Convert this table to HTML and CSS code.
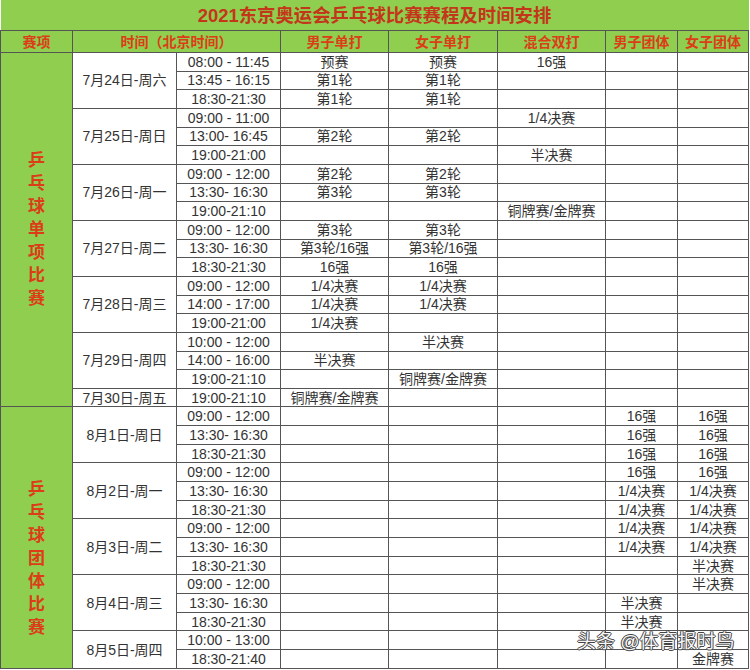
FILE: index.html
```html
<!DOCTYPE html>
<html lang="zh-CN">
<head>
<meta charset="utf-8">
<title>2021东京奥运会乒乓球比赛赛程及时间安排</title>
<link rel="stylesheet" href="styles.css">
</head>
<body>
<div class="page">
<table class="sched">
<colgroup>
<col class="c1"><col class="c2"><col class="c3"><col class="c4"><col class="c5"><col class="c6"><col class="c7"><col class="c8">
</colgroup>
<thead>
<tr class="title"><th colspan="8">2021东京奥运会乒乓球比赛赛程及时间安排</th></tr>
<tr class="head"><th>赛项</th><th colspan="2">时间（北京时间）</th><th>男子单打</th><th>女子单打</th><th>混合双打</th><th>男子团体</th><th>女子团体</th></tr>
</thead>
<tbody>
<tr><td rowspan="19" class="cat"><span class="cat-text">乒乓球单项比赛</span></td><td rowspan="3" class="date">7月24日-周六</td><td>08:00 - 11:45</td><td>预赛</td><td>预赛</td><td>16强</td><td></td><td></td></tr>
<tr><td>13:45 - 16:15</td><td>第1轮</td><td>第1轮</td><td></td><td></td><td></td></tr>
<tr><td>18:30-21:30</td><td>第1轮</td><td>第1轮</td><td></td><td></td><td></td></tr>

<tr><td rowspan="3" class="date">7月25日-周日</td><td>09:00 - 11:00</td><td></td><td></td><td>1/4决赛</td><td></td><td></td></tr>
<tr><td>13:00- 16:45</td><td>第2轮</td><td>第2轮</td><td></td><td></td><td></td></tr>
<tr><td>19:00-21:00</td><td></td><td></td><td>半决赛</td><td></td><td></td></tr>

<tr><td rowspan="3" class="date">7月26日-周一</td><td>09:00 - 12:00</td><td>第2轮</td><td>第2轮</td><td></td><td></td><td></td></tr>
<tr><td>13:30- 16:30</td><td>第3轮</td><td>第3轮</td><td></td><td></td><td></td></tr>
<tr><td>19:00-21:10</td><td></td><td></td><td>铜牌赛/金牌赛</td><td></td><td></td></tr>

<tr><td rowspan="3" class="date">7月27日-周二</td><td>09:00 - 12:00</td><td>第3轮</td><td>第3轮</td><td></td><td></td><td></td></tr>
<tr><td>13:30- 16:30</td><td>第3轮/16强</td><td>第3轮/16强</td><td></td><td></td><td></td></tr>
<tr><td>18:30-21:30</td><td>16强</td><td>16强</td><td></td><td></td><td></td></tr>

<tr><td rowspan="3" class="date">7月28日-周三</td><td>09:00 - 12:00</td><td>1/4决赛</td><td>1/4决赛</td><td></td><td></td><td></td></tr>
<tr><td>14:00 - 17:00</td><td>1/4决赛</td><td>1/4决赛</td><td></td><td></td><td></td></tr>
<tr><td>19:00-21:00</td><td>1/4决赛</td><td></td><td></td><td></td><td></td></tr>

<tr><td rowspan="3" class="date">7月29日-周四</td><td>10:00 - 12:00</td><td></td><td>半决赛</td><td></td><td></td><td></td></tr>
<tr><td>14:00 - 16:00</td><td>半决赛</td><td></td><td></td><td></td><td></td></tr>
<tr><td>19:00-21:10</td><td></td><td>铜牌赛/金牌赛</td><td></td><td></td><td></td></tr>

<tr><td class="date">7月30日-周五</td><td>19:00-21:10</td><td>铜牌赛/金牌赛</td><td></td><td></td><td></td><td></td></tr>

<tr><td rowspan="14" class="cat cat-team"><span class="cat-text">乒乓球团体比赛</span></td><td rowspan="3" class="date">8月1日-周日</td><td>09:00 - 12:00</td><td></td><td></td><td></td><td>16强</td><td>16强</td></tr>
<tr><td>13:30- 16:30</td><td></td><td></td><td></td><td>16强</td><td>16强</td></tr>
<tr><td>18:30-21:30</td><td></td><td></td><td></td><td>16强</td><td>16强</td></tr>

<tr><td rowspan="3" class="date">8月2日-周一</td><td>09:00 - 12:00</td><td></td><td></td><td></td><td>16强</td><td>16强</td></tr>
<tr><td>13:30- 16:30</td><td></td><td></td><td></td><td>1/4决赛</td><td>1/4决赛</td></tr>
<tr><td>18:30-21:30</td><td></td><td></td><td></td><td>1/4决赛</td><td>1/4决赛</td></tr>

<tr><td rowspan="3" class="date">8月3日-周二</td><td>09:00 - 12:00</td><td></td><td></td><td></td><td>1/4决赛</td><td>1/4决赛</td></tr>
<tr><td>13:30- 16:30</td><td></td><td></td><td></td><td>1/4决赛</td><td>1/4决赛</td></tr>
<tr><td>18:30-21:30</td><td></td><td></td><td></td><td></td><td>半决赛</td></tr>

<tr><td rowspan="3" class="date">8月4日-周三</td><td>09:00 - 12:00</td><td></td><td></td><td></td><td></td><td>半决赛</td></tr>
<tr><td>13:30- 16:30</td><td></td><td></td><td></td><td>半决赛</td><td></td></tr>
<tr><td>18:30-21:30</td><td></td><td></td><td></td><td>半决赛</td><td></td></tr>

<tr><td rowspan="2" class="date">8月5日-周四</td><td>10:00 - 13:00</td><td></td><td></td><td></td><td></td><td></td></tr>
<tr><td>18:30-21:40</td><td></td><td></td><td></td><td></td><td>金牌赛</td></tr>
</tbody>
</table>
<div class="watermark">头条 @体育报时鸟</div>
</div>
</body>
</html>
```

FILE: styles.css
```css
html, body {
  margin: 0;
  padding: 0;
  background: #ffffff;
}
body {
  width: 750px;
  height: 670px;
  overflow: hidden;
  font-family: "Liberation Sans", "Noto Sans CJK SC", sans-serif;
}
.page {
  position: relative;
  width: 750px;
}
.sched {
  border-collapse: collapse;
  table-layout: fixed;
  width: 748px;
  margin-left: 0;
  color: #333333;
  font-size: 14px;
}
.c1 { width: 72px; }
.c2 { width: 104px; }
.c3 { width: 104px; }
.c4 { width: 108px; }
.c5 { width: 109px; }
.c6 { width: 108px; }
.c7 { width: 72px; }
.c8 { width: 71px; }

.sched td, .sched th {
  border: 1px solid #555555;
  padding: 0;
  text-align: center;
  vertical-align: middle;
  white-space: nowrap;
  overflow: hidden;
  line-height: 16px;
}
.sched tbody tr {
  height: 18.67px;
}
.title th {
  height: 29px;
  background: #8fce4f;
  color: #c4361a;
  font-size: 18.4px;
  font-weight: bold;
  border-top: none;
  border-left: none;
  border-right: none;
  padding-top: 1px;
}
.head th {
  height: 21px;
  background: #8fce4f;
  color: #dc3c18;
  font-size: 14px;
  font-weight: bold;
}
.sched td.cat {
  background: #8fce4f;
  color: #dc3c18;
}
.sched td.cat-team {
  padding-top: 42px;
}
.cat-text {
  display: inline-block;
  width: 17px;
  font-size: 17px;
  line-height: 23px;
  font-weight: bold;
  white-space: normal;
  word-break: break-all;
}
.sched td.date {
  font-size: 14px;
}
.watermark {
  position: absolute;
  left: 577px;
  top: 632px;
  font-size: 19px;
  line-height: 20px;
  color: #f6f6f6;
  white-space: nowrap;
  text-shadow: 1px 0 0 #444, -1px 0 0 #444, 0 1px 0 #444, 0 -1px 0 #444;
}
```
